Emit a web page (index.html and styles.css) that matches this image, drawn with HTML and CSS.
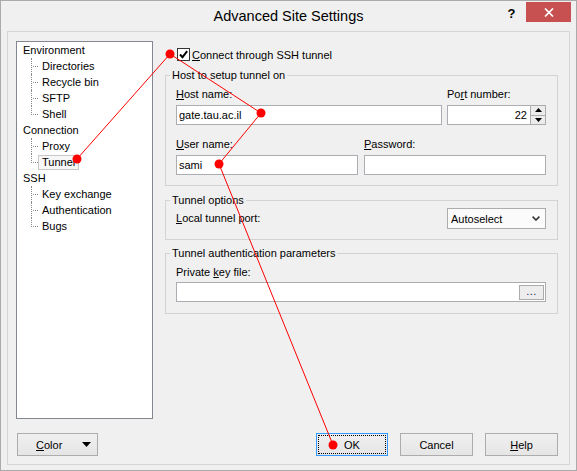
FILE: index.html
```html
<!DOCTYPE html>
<html>
<head>
<meta charset="utf-8">
<title>Advanced Site Settings</title>
<link rel="stylesheet" href="styles.css">
</head>
<body>
<div class="window">
  <div class="titlebar">
    <div></div>
    <div class="title">Advanced Site Settings</div>
    <div class="caption-buttons">
      <div class="cap-help">?</div>
      <div class="cap-close">
        <svg width="10" height="9" viewBox="0 0 10 9"><path d="M1 0.5 L9 8.5 M9 0.5 L1 8.5" stroke="#fff" stroke-width="1.7" fill="none"/></svg>
      </div>
    </div>
  </div>
  <div class="client">
    <div class="main">
      <ul class="tree">
        <li class="p">Environment</li>
        <li class="c"><span>Directories</span></li>
        <li class="c"><span>Recycle bin</span></li>
        <li class="c"><span>SFTP</span></li>
        <li class="c last"><span>Shell</span></li>
        <li class="p">Connection</li>
        <li class="c"><span>Proxy</span></li>
        <li class="c last sel"><span>Tunnel</span></li>
        <li class="p">SSH</li>
        <li class="c"><span>Key exchange</span></li>
        <li class="c"><span>Authentication</span></li>
        <li class="c last"><span>Bugs</span></li>
      </ul>
      <div class="page">
        <div class="check-row">
          <span class="checkbox"><svg width="11" height="11" viewBox="0 0 11 11"><path d="M2 5.5 L4.5 8.2 L9.2 2.2" stroke="#000" stroke-width="1.9" fill="none"/></svg></span>
          <span><u>C</u>onnect through SSH tunnel</span>
        </div>
        <fieldset class="group">
          <legend>Host to setup tunnel on</legend>
          <div class="gbody g1">
            <div class="row row-a">
              <div class="field">
                <div class="lbl"><u>H</u>ost name:</div>
                <div class="input">gate.tau.ac.il</div>
              </div>
              <div class="field">
                <div class="lbl">Po<u>r</u>t number:</div>
                <div class="input spin">
                  <span class="val">22</span>
                  <span class="spinner">
                    <span class="sbtn"><svg width="7" height="4" viewBox="0 0 7 4"><path d="M0 4 L3.5 0 L7 4 Z" fill="#000"/></svg></span>
                    <span class="sbtn"><svg width="7" height="4" viewBox="0 0 7 4"><path d="M0 0 L3.5 4 L7 0 Z" fill="#000"/></svg></span>
                  </span>
                </div>
              </div>
            </div>
            <div class="row row-b">
              <div class="field">
                <div class="lbl"><u>U</u>ser name:</div>
                <div class="input">sami</div>
              </div>
              <div class="field">
                <div class="lbl"><u>P</u>assword:</div>
                <div class="input"></div>
              </div>
            </div>
          </div>
        </fieldset>
        <fieldset class="group g2">
          <legend>Tunnel options</legend>
          <div class="gbody opt-row">
            <div class="lbl"><u>L</u>ocal tunnel port:</div>
            <div class="select">
              <span>Autoselect</span>
              <svg width="8" height="5" viewBox="0 0 8 5"><path d="M0.6 0.6 L4 4 L7.4 0.6" stroke="#333" stroke-width="1.6" fill="none"/></svg>
            </div>
          </div>
        </fieldset>
        <fieldset class="group g3">
          <legend>Tunnel authentication parameters</legend>
          <div class="gbody g3body">
            <div class="lbl lbl-key">Private <u>k</u>ey file:</div>
            <div class="input keyfile">
              <span></span>
              <span class="browse">...</span>
            </div>
          </div>
        </fieldset>
      </div>
    </div>
    <div class="buttons">
      <div class="btn btn-color"><span><u>C</u>olor</span><svg width="9" height="5" viewBox="0 0 9 5"><path d="M0 0 L9 0 L4.5 5 Z" fill="#000"/></svg></div>
      <div class="spacer"></div>
      <div class="btn btn-ok">OK</div>
      <div class="btn btn-cancel">Cancel</div>
      <div class="btn btn-help"><u>H</u>elp</div>
    </div>
  </div>
  <svg class="annot" width="577" height="471" viewBox="0 0 577 471">
    <polyline points="77,159 170,54 261,113 219,164 333,445" fill="none" stroke="#ff0000" stroke-width="1"/>
    <circle cx="77" cy="159" r="4.5" fill="#ff0000"/>
    <circle cx="170" cy="54" r="4.5" fill="#ff0000"/>
    <circle cx="261" cy="113" r="4.5" fill="#ff0000"/>
    <circle cx="219" cy="164" r="4.5" fill="#ff0000"/>
    <circle cx="333" cy="445" r="4.5" fill="#ff0000"/>
  </svg>
</div>
</body>
</html>
```
FILE: styles.css
```css
* { box-sizing: border-box; }
html, body { margin: 0; padding: 0; }
body {
  width: 577px;
  height: 471px;
  overflow: hidden;
  background: #f0f0f0;
  font-family: "Liberation Sans", Arial, sans-serif;
  font-size: 11px;
  color: #000;
}
.window {
  position: relative;
  width: 577px;
  height: 471px;
  border: 1px solid #ababab;
  background: #f0f0f0;
}
.titlebar {
  height: 30px;
  display: grid;
  grid-template-columns: 1fr auto 1fr;
}
.title {
  align-self: center;
  font-size: 14.5px;
  line-height: 18px;
  color: #000;
  white-space: nowrap;
}
.caption-buttons {
  justify-self: end;
  align-self: start;
  display: flex;
  padding-right: 5px;
  padding-top: 1px;
}
.cap-help {
  width: 29px;
  height: 20px;
  display: flex;
  align-items: center;
  justify-content: center;
  font-weight: bold;
  font-size: 13px;
  padding-top: 2px;
}
.cap-close {
  width: 45px;
  height: 20px;
  background: #c75050;
  display: flex;
  align-items: center;
  justify-content: center;
}
.client {
  margin-left: 6px;
  width: 563px;
  height: 434px;
  border: 1px solid #d5d5d5;
  padding: 9px 11px 8px 8px;
  display: flex;
  flex-direction: column;
}
.main {
  display: flex;
  gap: 12px;
}
.tree {
  width: 137px;
  height: 378px;
  margin: 0;
  padding: 0;
  list-style: none;
  background: #fff;
  border: 1px solid #828790;
}
.tree li {
  position: relative;
  height: 16px;
  display: flex;
  align-items: center;
  white-space: nowrap;
}
.tree .p { padding-left: 6px; }
.tree .c { padding-left: 21px; }
.tree .c::before {
  content: "";
  position: absolute;
  left: 14px;
  top: 0;
  height: 16px;
  border-left: 1px dotted #8a8a8a;
}
.tree .c.last::before { height: 9px; }
.tree .c::after {
  content: "";
  position: absolute;
  left: 16px;
  top: 8px;
  width: 5px;
  border-top: 1px dotted #8a8a8a;
}
.tree .c span {
  display: inline-block;
  height: 15px;
  line-height: 13px;
  padding: 0 3px;
  border: 1px solid transparent;
}
.tree .sel span {
  border-color: #c8c8c8;
  background: #f7f7f7;
}
.page {
  width: 393px;
}
.check-row {
  display: flex;
  align-items: center;
  height: 15px;
  margin-top: 6px;
  margin-left: 12px;
  gap: 2px;
}
.checkbox {
  width: 13px;
  height: 13px;
  border: 1px solid #333;
  background: #fff;
  display: flex;
  align-items: center;
  justify-content: center;
}
.group {
  margin: 6px 0 0 0;
  padding: 0;
  border: 1px solid #d3d3d3;
  min-width: 0;
}
.group legend {
  margin-left: 4px;
  padding: 0 2px;
  line-height: 15px;
  height: 15px;
}
.g2 { margin-top: 7px; }
.gbody {
  padding: 4px 11px 10px 10px;
}
.lbl {
  height: 15px;
  line-height: 15px;
  white-space: nowrap;
}
.row {
  display: grid;
}
.row-a {
  grid-template-columns: 266px 99px;
  column-gap: 5px;
}
.row-b {
  grid-template-columns: 182px 182px;
  column-gap: 6px;
  margin-top: 12px;
}
.field .lbl { margin-bottom: 3px; }
.input {
  height: 20px;
  border: 1px solid #abadb3;
  background: #fff;
  padding: 0 2px 0 2px;
  display: flex;
  align-items: center;
  white-space: nowrap;
}
.spin {
  justify-content: flex-end;
  padding: 0;
}
.spin .val { padding-right: 3px; }
.spinner {
  display: flex;
  flex-direction: column;
  width: 16px;
  height: 20px;
  margin: -1px -1px -1px 0;
}
.sbtn {
  flex: 1;
  border: 1px solid #acacac;
  background: #ececec;
  display: flex;
  align-items: center;
  justify-content: center;
}
.sbtn + .sbtn { border-top: none; }
.opt-row {
  padding-top: 0;
  display: flex;
  justify-content: space-between;
  align-items: center;
}
.select {
  width: 99px;
  height: 21px;
  border: 1px solid #acacac;
  background: #fbfbfb;
  padding: 0 5px 0 3px;
  display: flex;
  justify-content: space-between;
  align-items: center;
}
.g3 { margin-top: 6px; }
.g3body { padding-bottom: 11px; }
.lbl-key { margin-bottom: 2px; }
.keyfile {
  justify-content: space-between;
  padding-right: 1px;
}
.browse {
  width: 25px;
  height: 15px;
  border: 1px solid #acacac;
  background: #ededed;
  color: #1a1a5a;
  text-align: center;
  line-height: 11px;
  font-size: 11px;
  letter-spacing: 0.5px;
}
.buttons {
  display: flex;
  gap: 12px;
  margin-top: 14px;
  padding-left: 1px;
}
.spacer { flex: 1; }
.btn {
  height: 23px;
  border: 1px solid #acacac;
  background: linear-gradient(#f0f0f0, #e5e5e5);
  display: flex;
  align-items: center;
  justify-content: center;
}
.btn-color {
  width: 81px;
  justify-content: space-between;
  padding: 0 6px 0 18px;
}
.btn-ok {
  width: 72px;
  border-color: #3399ff;
  outline: 1px dotted #000;
  outline-offset: -3px;
}
.btn-cancel { width: 73px; }
.btn-help { width: 73px; }
.annot {
  position: absolute;
  left: -1px;
  top: -1px;
  pointer-events: none;
}
```
